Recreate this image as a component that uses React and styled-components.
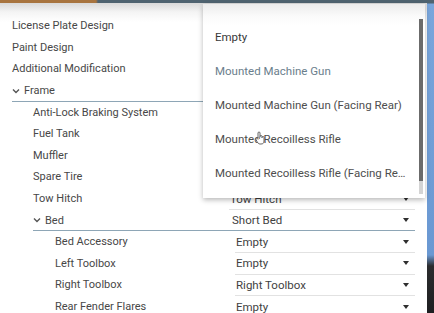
import React from 'react';
import styled, { createGlobalStyle } from 'styled-components';

// values under the open dropdown are covered, so only the visible ones are listed
const rows = [
  { label: 'License Plate Design', level: 0 },
  { label: 'Paint Design', level: 0 },
  { label: 'Additional Modification', level: 0 },
  { label: 'Frame', level: 0, group: true },
  { label: 'Anti-Lock Braking System', level: 1 },
  { label: 'Fuel Tank', level: 1 },
  { label: 'Muffler', level: 1 },
  { label: 'Spare Tire', level: 1 },
  { label: 'Tow Hitch', level: 1, value: 'Tow Hitch' },
  { label: 'Bed', level: 1, group: true, value: 'Short Bed' },
  { label: 'Bed Accessory', level: 2, value: 'Empty' },
  { label: 'Left Toolbox', level: 2, value: 'Empty' },
  { label: 'Right Toolbox', level: 2, value: 'Right Toolbox' },
  { label: 'Rear Fender Flares', level: 2, value: 'Empty' },
];

const options = [
  { text: 'Empty', tone: 'current' },
  { text: 'Mounted Machine Gun', tone: 'hover' },
  { text: 'Mounted Machine Gun (Facing Rear)' },
  { text: 'Mounted Recoilless Rifle' },
  { text: 'Mounted Recoilless Rifle (Facing Rear)' },
];

const labelIndent = [12, 33, 55];
const selectIndent = [4, 4, 10];

function Chevron() {
  return (
    <svg width="8" height="6" viewBox="0 0 8 6">
      <polyline points="1,1.5 4,4.5 7,1.5" fill="none" stroke="#555" strokeWidth="1.4" />
    </svg>
  );
}

function HandCursor() {
  return (
    <svg width="11" height="14" viewBox="0 0 11 14">
      <path
        d="M3 7 V2 a1 1 0 0 1 2 0 V6 M5 5.5 a1 1 0 0 1 2 0 V7 M7 6.5 a1 1 0 0 1 2 0 V10 c0 2 -1 3 -3 3 H5 c-1.5 0 -2 -1 -3 -2.5 L1 8.5 a0.9 0.9 0 0 1 1.5 -1 L3 8.5"
        fill="#fff"
        stroke="#555"
        strokeWidth="0.9"
        strokeLinejoin="round"
      />
    </svg>
  );
}

function App() {
  return (
    <>
      <GlobalStyle />
      <Page>
        <Main>
          <TopBar />
          <List>
            {rows.map((row) => (
              <Row key={row.label}>
                <Label $indent={labelIndent[row.level]} $group={row.group}>
                  {row.group && <Chevron />}
                  <span>{row.label}</span>
                </Label>
                {row.value ? (
                  <Select $indent={selectIndent[row.level]} $group={row.group}>
                    <span>{row.value}</span>
                    <Arrow />
                  </Select>
                ) : (
                  <Covered $group={row.group} />
                )}
              </Row>
            ))}
          </List>
          <Dropdown>
            <OptionList>
              {options.map((opt) => (
                <Option key={opt.text} $tone={opt.tone}>
                  {opt.text}
                </Option>
              ))}
            </OptionList>
            <ScrollTrack>
              <ScrollThumb />
            </ScrollTrack>
            <Cursor>
              <HandCursor />
            </Cursor>
          </Dropdown>
        </Main>
        <SideStrip />
      </Page>
    </>
  );
}

const GlobalStyle = createGlobalStyle`
  html, body {
    margin: 0;
    padding: 0;
    background: #fff;
  }
  body {
    font-family: Roboto, "Liberation Sans", sans-serif;
  }
`;

const Page = styled.div`
  display: flex;
  width: 434px;
  height: 313px;
  overflow: hidden;
`;

const Main = styled.div`
  position: relative;
  flex: 1;
  display: flex;
  flex-direction: column;
  background: linear-gradient(#d9d9d9 3px, #f4f4f4 12px, #fff 22px);
`;

const TopBar = styled.div`
  height: 3px;
  flex-shrink: 0;
  background: linear-gradient(90deg, #a8743f 0, #a8743f 96px, #4f6370 98px, #4f6370 100%);
`;

const List = styled.div`
  display: flex;
  flex-direction: column;
  padding-top: 12.5px;
`;

const Row = styled.div`
  display: grid;
  grid-template-columns: 225px 190px;
  height: 21.6px;
`;

const Label = styled.div`
  display: flex;
  align-items: center;
  gap: 4px;
  padding-left: ${(p) => p.$indent}px;
  font-size: 11px;
  color: #474747;
  white-space: nowrap;
  box-sizing: border-box;
  border-bottom: 1px solid ${(p) => (p.$group ? '#8ea6b6' : 'transparent')};
  margin-left: ${(p) => (p.$group ? p.$indent : 0)}px;
  ${(p) => p.$group && 'padding-left: 0;'}
`;

const Select = styled.div`
  display: flex;
  align-items: center;
  justify-content: space-between;
  padding: 0 6px 0 ${(p) => (p.$group ? 7 : 1)}px;
  margin-left: ${(p) => (p.$group ? 0 : p.$indent)}px;
  font-size: 11.5px;
  color: #3f3f3f;
  box-sizing: border-box;
  border-bottom: 1px solid ${(p) => (p.$group ? '#8ea6b6' : '#e2e2e2')};
`;

const Covered = styled.div`
  box-sizing: border-box;
  border-bottom: 1px solid ${(p) => (p.$group ? '#8ea6b6' : 'transparent')};
`;

const Arrow = styled.span`
  width: 0;
  height: 0;
  border-left: 3.5px solid transparent;
  border-right: 3.5px solid transparent;
  border-top: 4px solid #2e2e2e;
`;

const Dropdown = styled.div`
  position: absolute;
  left: 203px;
  top: 4px;
  width: 222px;
  height: 194px;
  display: flex;
  background: linear-gradient(#ececec 0, #fafafa 12px, #fff 22px);
  box-shadow: 0 2px 5px rgba(0, 0, 0, 0.28);
`;

const OptionList = styled.div`
  flex: 1;
  min-width: 0;
  display: flex;
  flex-direction: column;
  padding-top: 16px;
`;

const Option = styled.div`
  height: 34px;
  flex-shrink: 0;
  padding: 0 10px 0 12px;
  font-size: 11.5px;
  line-height: 34px;
  white-space: nowrap;
  overflow: hidden;
  text-overflow: ellipsis;
  color: ${(p) => (p.$tone === 'current' ? '#383838' : p.$tone === 'hover' ? '#6a7e8c' : '#4e4e4e')};
`;

const ScrollTrack = styled.div`
  display: flex;
  flex-direction: column;
  width: 4px;
  margin: 15px 2px 4px 0;
  background: #d4d4d4;
`;

const ScrollThumb = styled.div`
  height: 162px;
  background: #6b6b6b;
`;

const Cursor = styled.div`
  position: absolute;
  left: 52px;
  top: 127px;
  line-height: 0;
`;

const SideStrip = styled.div`
  width: 7px;
  flex-shrink: 0;
  background: linear-gradient(#4f6370 0, #4f6370 3px, #7aa6dc 4px, #6a98d2 255px, #2b2c2e 266px, #1e1f21 100%);
`;

export default App;
